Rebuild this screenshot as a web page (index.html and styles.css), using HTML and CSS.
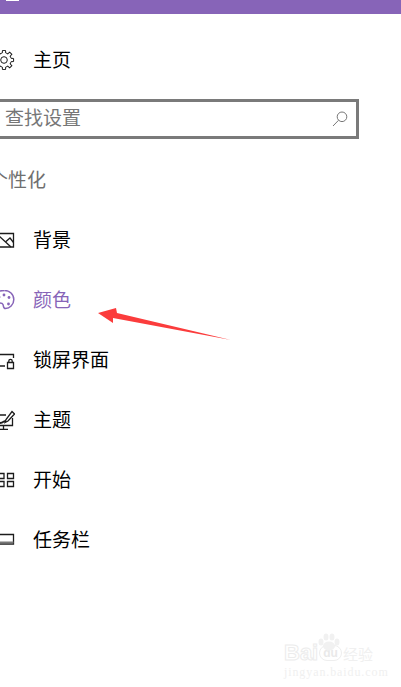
FILE: index.html
```html
<!DOCTYPE html>
<html lang="zh-CN">
<head>
<meta charset="utf-8">
<title>个性化</title>
<link rel="stylesheet" href="styles.css">
</head>
<body>
<div class="topbar"><span class="topbar-mark"></span></div>
<main class="pane">
  <div class="row">
    <svg class="icon" viewBox="-5 0 20 20" fill="none" stroke="currentColor" stroke-width="1">
      <defs><path id="tooth" d="M-2.760-6.650-1.740-6.990-1.520-9.580H1.520L1.740-6.990 2.760-6.650"/></defs>
      <g transform="translate(4 10)">
        <use href="#tooth"/>
        <use href="#tooth" transform="rotate(45)"/>
        <use href="#tooth" transform="rotate(90)"/>
        <use href="#tooth" transform="rotate(135)"/>
        <use href="#tooth" transform="rotate(180)"/>
        <use href="#tooth" transform="rotate(225)"/>
        <use href="#tooth" transform="rotate(270)"/>
        <use href="#tooth" transform="rotate(315)"/>
        <circle r="3.300"/>
      </g>
    </svg>
    <span class="label">主页</span>
  </div>
  <div class="search">
    <span class="search-text">查找设置</span>
    <svg class="search-icon" viewBox="0 0 16 16" fill="none" stroke="currentColor" stroke-width="1"><circle cx="10" cy="5.800" r="4.800"/><path d="M6.500 9.300 1 15"/></svg>
  </div>
  <div class="section">个性化</div>
  <div class="row">
    <svg class="icon" viewBox="-5 0 20 20" fill="none" stroke="currentColor" stroke-width="1.300"><path d="M-5 3.500H13.500V17H-5"/><path d="M-2 5 11 17M6 11.500 10 8l3.500 4.500"/></svg>
    <span class="label">背景</span>
  </div>
  <div class="row is-active">
    <svg class="icon" viewBox="-5 0 20 20" fill="none" stroke="currentColor" stroke-width="1.500"><path d="M4.500 0.500C9.500 0.500 13.800 4 13.800 9.500S9.500 18.500 5.500 18.500C3 18.500 3.700 16 3 14.500S0.500 13 -1.500 13-5 12-5 10"/><path d="M-5 4.500C-3.500 2-0.500 0.500 4.500 0.500"/><circle cx="4" cy="5" r="1.400" fill="currentColor" stroke="none"/><circle cx="9" cy="7.500" r="1.400" fill="currentColor" stroke="none"/><circle cx="8.500" cy="14" r="1.400" fill="currentColor" stroke="none"/><circle cx="-1" cy="7" r="1.400" fill="currentColor" stroke="none"/></svg>
    <span class="label">颜色</span>
  </div>
  <div class="row">
    <svg class="icon" viewBox="-5 0 20 20" fill="none" stroke="currentColor" stroke-width="1.300"><path d="M-5 4.500H13.500V8M-5 16H5"/><path d="M7.500 12.500H13.500V18.500H7.500ZM8.800 12.500V11a1.700 1.700 0 0 1 3.400 0v1.500"/></svg>
    <span class="label">锁屏界面</span>
  </div>
  <div class="row">
    <svg class="icon" viewBox="-5 0 20 20" fill="none" stroke="currentColor" stroke-width="1.300"><path d="M-5 5H6M12.500 8V15.500H-5M3.500 15.500V19.500M-5 19.500H8"/><path d="M12 1.500 14.500 4 8 11 5 12.500 6 9.500Z"/><path d="M6 10.500C4 11 3 13 0 13" stroke-width="1.800"/></svg>
    <span class="label">主题</span>
  </div>
  <div class="row">
    <svg class="icon" viewBox="-5 0 20 20" fill="none" stroke="currentColor" stroke-width="1.300"><path d="M-5 3.500H4V8.500H-5M7.500 3.500H13.500V8.500H7.500ZM-5 11.500H4V16.500H-5M7.500 11.500H13.500V16.500H7.500Z"/></svg>
    <span class="label">开始</span>
  </div>
  <div class="row">
    <svg class="icon" viewBox="-5 0 20 20" fill="none" stroke="currentColor" stroke-width="1.300"><path d="M-5 4.500H13.500V14H-5"/><path d="M-5 12.500H13.500" stroke-width="2" stroke="#777"/></svg>
    <span class="label">任务栏</span>
  </div>
</main>
<svg class="arrow" viewBox="0 0 401 687"><path d="M98 313 116 308 117 313 231 340 113 318 113 323z"/></svg>
<div class="watermark">
  <svg class="wm-paw" viewBox="0 0 22 18"><ellipse cx="3" cy="9" rx="2.500" ry="3.500"/><ellipse cx="8" cy="4" rx="2.500" ry="3.500"/><ellipse cx="14" cy="4" rx="2.500" ry="3.500"/><ellipse cx="19" cy="9" rx="2.500" ry="3.500"/><ellipse cx="11" cy="13" rx="6" ry="4.500"/></svg>
  <div class="wm-top"><span class="wm-bai">Bai</span><span class="wm-du">du</span><span class="wm-cn">经验</span></div>
  <div class="wm-url">jingyan.baidu.com</div>
</div>
</body>
</html>
```
FILE: styles.css
```css
html, body {
  margin: 0;
  padding: 0;
  height: 100%;
  overflow: hidden;
  background: #fff;
  font-family: "Noto Sans CJK SC", "Noto Sans", sans-serif;
}
.topbar {
  height: 14px;
  background: #8764b8;
  padding-left: 6px;
}
.topbar-mark {
  display: block;
  width: 13px;
  height: 1px;
  background: #fff;
}
.pane {
  display: flex;
  flex-direction: column;
  margin-left: -5px;
  padding-top: 16px;
}
.row {
  display: flex;
  align-items: center;
  height: 60px;
  color: #000;
}
.row.is-active {
  color: #8764b8;
}
.icon {
  flex: none;
  width: 20px;
  height: 20px;
  margin-right: 18px;
  margin-left: 0;
  color: #1c1c1c;
}
.is-active .icon {
  color: #8764b8;
}
.label {
  font-size: 19px;
  line-height: 24px;
  padding-bottom: 2px;
}
.search {
  display: flex;
  align-items: center;
  justify-content: space-between;
  box-sizing: border-box;
  width: 364px;
  height: 40px;
  margin-top: 9px;
  border: 3px solid #7a7a7a;
  padding: 0 8px 0 7px;
}
.search-text {
  font-size: 19px;
  line-height: 24px;
  color: #767676;
  padding-bottom: 4px;
}
.search-icon {
  width: 16px;
  height: 16px;
  color: #777;
}
.section {
  font-size: 19px;
  line-height: 24px;
  color: #6f6f6f;
  margin-top: 28px;
  margin-left: -6px;
  margin-bottom: 19px;
}
.arrow {
  position: absolute;
  left: 0;
  top: 0;
  width: 401px;
  height: 687px;
  fill: #fb3c3c;
  pointer-events: none;
}
.watermark {
  position: absolute;
  left: 284px;
  top: 643px;
  color: #f0f0f0;
  font-family: "Liberation Sans", sans-serif;
}
.wm-paw {
  position: absolute;
  left: 34px;
  top: -10px;
  width: 22px;
  height: 18px;
  fill: #f1f1f1;
}
.wm-top {
  display: flex;
  align-items: center;
  gap: 1px;
  height: 20px;
}
.wm-bai {
  font-size: 22px;
  font-weight: 700;
  color: #fff;
  -webkit-text-stroke: 1px #ececec;
}
.wm-du {
  font-size: 12px;
  font-weight: 700;
  color: #e9e9e9;
  background: #fff;
  border: 1px solid #eee;
  border-radius: 8px;
  padding: 0 3px;
}
.wm-cn {
  font-family: "Noto Sans CJK SC", sans-serif;
  font-size: 15px;
}
.wm-url {
  font-family: "Liberation Serif", serif;
  font-size: 12px;
  letter-spacing: .9px;
  line-height: 14px;
  margin-top: 2px;
  color: #f0f0f0;
}
```
